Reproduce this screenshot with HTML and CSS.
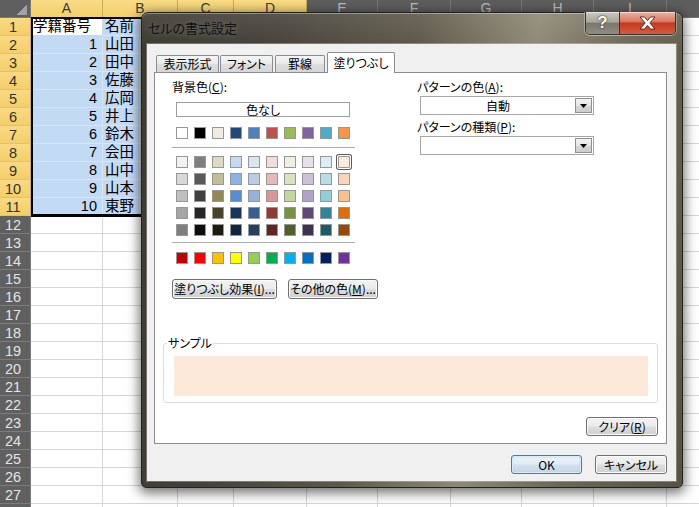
FILE: index.html
```html
<!DOCTYPE html>
<html lang="ja">
<head>
<meta charset="utf-8">
<title>セルの書式設定</title>
<link rel="stylesheet" href="styles.css">
</head>
<body>
<div class="sheet">
  <div class="row hdr"><span class="corner"><span class="tri"></span></span><span class="ch hl">A</span><span class="ch hl">B</span><span class="ch hl">C</span><span class="ch hl">D</span><span class="ch">E</span><span class="ch">F</span><span class="ch">G</span><span class="ch">H</span><span class="ch">I</span><span class="ch"></span></div>
  <div class="row"><span class="rh hl">1</span><span class="c act">学籍番号</span><span class="c sel">名前</span><span class="c"></span><span class="c"></span><span class="c"></span><span class="c"></span><span class="c"></span><span class="c"></span><span class="c"></span><span class="c"></span></div>
  <div class="row"><span class="rh hl">2</span><span class="c sel num">1</span><span class="c sel">山田</span><span class="c"></span><span class="c"></span><span class="c"></span><span class="c"></span><span class="c"></span><span class="c"></span><span class="c"></span><span class="c"></span></div>
  <div class="row"><span class="rh hl">3</span><span class="c sel num">2</span><span class="c sel">田中</span><span class="c"></span><span class="c"></span><span class="c"></span><span class="c"></span><span class="c"></span><span class="c"></span><span class="c"></span><span class="c"></span></div>
  <div class="row"><span class="rh hl">4</span><span class="c sel num">3</span><span class="c sel">佐藤</span><span class="c"></span><span class="c"></span><span class="c"></span><span class="c"></span><span class="c"></span><span class="c"></span><span class="c"></span><span class="c"></span></div>
  <div class="row"><span class="rh hl">5</span><span class="c sel num">4</span><span class="c sel">広岡</span><span class="c"></span><span class="c"></span><span class="c"></span><span class="c"></span><span class="c"></span><span class="c"></span><span class="c"></span><span class="c"></span></div>
  <div class="row"><span class="rh hl">6</span><span class="c sel num">5</span><span class="c sel">井上</span><span class="c"></span><span class="c"></span><span class="c"></span><span class="c"></span><span class="c"></span><span class="c"></span><span class="c"></span><span class="c"></span></div>
  <div class="row"><span class="rh hl">7</span><span class="c sel num">6</span><span class="c sel">鈴木</span><span class="c"></span><span class="c"></span><span class="c"></span><span class="c"></span><span class="c"></span><span class="c"></span><span class="c"></span><span class="c"></span></div>
  <div class="row"><span class="rh hl">8</span><span class="c sel num">7</span><span class="c sel">会田</span><span class="c"></span><span class="c"></span><span class="c"></span><span class="c"></span><span class="c"></span><span class="c"></span><span class="c"></span><span class="c"></span></div>
  <div class="row"><span class="rh hl">9</span><span class="c sel num">8</span><span class="c sel">山中</span><span class="c"></span><span class="c"></span><span class="c"></span><span class="c"></span><span class="c"></span><span class="c"></span><span class="c"></span><span class="c"></span></div>
  <div class="row"><span class="rh hl">10</span><span class="c sel num">9</span><span class="c sel">山本</span><span class="c"></span><span class="c"></span><span class="c"></span><span class="c"></span><span class="c"></span><span class="c"></span><span class="c"></span><span class="c"></span></div>
  <div class="row"><span class="rh hl">11</span><span class="c sel num">10</span><span class="c sel">東野</span><span class="c"></span><span class="c"></span><span class="c"></span><span class="c"></span><span class="c"></span><span class="c"></span><span class="c"></span><span class="c"></span></div>
  <div class="row"><span class="rh">12</span><span class="c"></span><span class="c"></span><span class="c"></span><span class="c"></span><span class="c"></span><span class="c"></span><span class="c"></span><span class="c"></span><span class="c"></span><span class="c"></span></div>
  <div class="row"><span class="rh">13</span><span class="c"></span><span class="c"></span><span class="c"></span><span class="c"></span><span class="c"></span><span class="c"></span><span class="c"></span><span class="c"></span><span class="c"></span><span class="c"></span></div>
  <div class="row"><span class="rh">14</span><span class="c"></span><span class="c"></span><span class="c"></span><span class="c"></span><span class="c"></span><span class="c"></span><span class="c"></span><span class="c"></span><span class="c"></span><span class="c"></span></div>
  <div class="row"><span class="rh">15</span><span class="c"></span><span class="c"></span><span class="c"></span><span class="c"></span><span class="c"></span><span class="c"></span><span class="c"></span><span class="c"></span><span class="c"></span><span class="c"></span></div>
  <div class="row"><span class="rh">16</span><span class="c"></span><span class="c"></span><span class="c"></span><span class="c"></span><span class="c"></span><span class="c"></span><span class="c"></span><span class="c"></span><span class="c"></span><span class="c"></span></div>
  <div class="row"><span class="rh">17</span><span class="c"></span><span class="c"></span><span class="c"></span><span class="c"></span><span class="c"></span><span class="c"></span><span class="c"></span><span class="c"></span><span class="c"></span><span class="c"></span></div>
  <div class="row"><span class="rh">18</span><span class="c"></span><span class="c"></span><span class="c"></span><span class="c"></span><span class="c"></span><span class="c"></span><span class="c"></span><span class="c"></span><span class="c"></span><span class="c"></span></div>
  <div class="row"><span class="rh">19</span><span class="c"></span><span class="c"></span><span class="c"></span><span class="c"></span><span class="c"></span><span class="c"></span><span class="c"></span><span class="c"></span><span class="c"></span><span class="c"></span></div>
  <div class="row"><span class="rh">20</span><span class="c"></span><span class="c"></span><span class="c"></span><span class="c"></span><span class="c"></span><span class="c"></span><span class="c"></span><span class="c"></span><span class="c"></span><span class="c"></span></div>
  <div class="row"><span class="rh">21</span><span class="c"></span><span class="c"></span><span class="c"></span><span class="c"></span><span class="c"></span><span class="c"></span><span class="c"></span><span class="c"></span><span class="c"></span><span class="c"></span></div>
  <div class="row"><span class="rh">22</span><span class="c"></span><span class="c"></span><span class="c"></span><span class="c"></span><span class="c"></span><span class="c"></span><span class="c"></span><span class="c"></span><span class="c"></span><span class="c"></span></div>
  <div class="row"><span class="rh">23</span><span class="c"></span><span class="c"></span><span class="c"></span><span class="c"></span><span class="c"></span><span class="c"></span><span class="c"></span><span class="c"></span><span class="c"></span><span class="c"></span></div>
  <div class="row"><span class="rh">24</span><span class="c"></span><span class="c"></span><span class="c"></span><span class="c"></span><span class="c"></span><span class="c"></span><span class="c"></span><span class="c"></span><span class="c"></span><span class="c"></span></div>
  <div class="row"><span class="rh">25</span><span class="c"></span><span class="c"></span><span class="c"></span><span class="c"></span><span class="c"></span><span class="c"></span><span class="c"></span><span class="c"></span><span class="c"></span><span class="c"></span></div>
  <div class="row"><span class="rh">26</span><span class="c"></span><span class="c"></span><span class="c"></span><span class="c"></span><span class="c"></span><span class="c"></span><span class="c"></span><span class="c"></span><span class="c"></span><span class="c"></span></div>
  <div class="row"><span class="rh">27</span><span class="c"></span><span class="c"></span><span class="c"></span><span class="c"></span><span class="c"></span><span class="c"></span><span class="c"></span><span class="c"></span><span class="c"></span><span class="c"></span></div>
  <div class="row"><span class="rh"></span><span class="c"></span><span class="c"></span><span class="c"></span><span class="c"></span><span class="c"></span><span class="c"></span><span class="c"></span><span class="c"></span><span class="c"></span><span class="c"></span></div>
  <div class="selbox"></div>

  <div class="dialog">
    <div class="titlebar">
      <span class="title">セルの書式設定</span>
      <div class="capbtns">
        <span class="cap help">?</span>
        <span class="cap close"><svg width="17" height="14" viewBox="0 0 17 14"><polygon points="1,1 5.5,1 8.5,4.6 11.5,1 16,1 10.8,7 16,13 11.5,13 8.5,9.4 5.5,13 1,13 6.2,7" fill="#fff" stroke="#5b1d12" stroke-width="0.9" stroke-linejoin="round"/></svg></span>
      </div>
    </div>
    <div class="client">
      <div class="tabs">
        <span class="tab t1">表示形式</span>
        <span class="tab t2">フォント</span>
        <span class="tab t3">罫線</span>
        <span class="tab t4 active">塗りつぶし</span>
      </div>
      <div class="panel">
        <div class="top">
          <div class="leftcol">
            <div class="lbl">背景色(<u>C</u>):</div>
            <div class="nocolor">色なし</div>
            <div class="swrow first">
              <span class="sw" style="background:#ffffff"></span><span class="sw" style="background:#000000"></span><span class="sw" style="background:#eeece1"></span><span class="sw" style="background:#1f497d"></span><span class="sw" style="background:#4f81bd"></span><span class="sw" style="background:#c0504d"></span><span class="sw" style="background:#9bbb59"></span><span class="sw" style="background:#8064a2"></span><span class="sw" style="background:#4bacc6"></span><span class="sw" style="background:#f79646"></span>
            </div>
            <div class="sep"></div>
            <div class="theme">
              <div class="swrow">
                <span class="sw" style="background:#f2f2f2"></span><span class="sw" style="background:#7f7f7f"></span><span class="sw" style="background:#ddd9c3"></span><span class="sw" style="background:#c6d9f0"></span><span class="sw" style="background:#dbe5f1"></span><span class="sw" style="background:#f2dcdb"></span><span class="sw" style="background:#ebf1dd"></span><span class="sw" style="background:#e5e0ec"></span><span class="sw" style="background:#dbeef3"></span><span class="sw picked" style="background:#fdeada"></span>
              </div>
              <div class="swrow">
                <span class="sw" style="background:#d8d8d8"></span><span class="sw" style="background:#595959"></span><span class="sw" style="background:#c4bd97"></span><span class="sw" style="background:#8db3e2"></span><span class="sw" style="background:#b8cce4"></span><span class="sw" style="background:#e5b9b7"></span><span class="sw" style="background:#d7e3bc"></span><span class="sw" style="background:#ccc1d9"></span><span class="sw" style="background:#b7dde8"></span><span class="sw" style="background:#fbd5b5"></span>
              </div>
              <div class="swrow">
                <span class="sw" style="background:#bfbfbf"></span><span class="sw" style="background:#3f3f3f"></span><span class="sw" style="background:#938953"></span><span class="sw" style="background:#548dd4"></span><span class="sw" style="background:#95b3d7"></span><span class="sw" style="background:#d99694"></span><span class="sw" style="background:#c3d69b"></span><span class="sw" style="background:#b2a2c7"></span><span class="sw" style="background:#92cddc"></span><span class="sw" style="background:#fac08f"></span>
              </div>
              <div class="swrow">
                <span class="sw" style="background:#a5a5a5"></span><span class="sw" style="background:#262626"></span><span class="sw" style="background:#494429"></span><span class="sw" style="background:#17365d"></span><span class="sw" style="background:#366092"></span><span class="sw" style="background:#953734"></span><span class="sw" style="background:#76923c"></span><span class="sw" style="background:#5f497a"></span><span class="sw" style="background:#31859b"></span><span class="sw" style="background:#e36c09"></span>
              </div>
              <div class="swrow">
                <span class="sw" style="background:#7f7f7f"></span><span class="sw" style="background:#0c0c0c"></span><span class="sw" style="background:#1d1b10"></span><span class="sw" style="background:#0f243e"></span><span class="sw" style="background:#244061"></span><span class="sw" style="background:#632423"></span><span class="sw" style="background:#4f6128"></span><span class="sw" style="background:#3f3151"></span><span class="sw" style="background:#205867"></span><span class="sw" style="background:#974806"></span>
              </div>
            </div>
            <div class="sep sep2"></div>
            <div class="swrow std">
              <span class="sw" style="background:#c00000"></span><span class="sw" style="background:#ff0000"></span><span class="sw" style="background:#ffc000"></span><span class="sw" style="background:#ffff00"></span><span class="sw" style="background:#92d050"></span><span class="sw" style="background:#00b050"></span><span class="sw" style="background:#00b0f0"></span><span class="sw" style="background:#0070c0"></span><span class="sw" style="background:#002060"></span><span class="sw" style="background:#7030a0"></span>
            </div>
            <div class="btnrow">
              <span class="btn effects">塗りつぶし効果(<u>I</u>)...</span>
              <span class="btn more">その他の色(<u>M</u>)...</span>
            </div>
          </div>
          <div class="rightcol">
            <div class="lbl">パターンの色(<u>A</u>):</div>
            <div class="combo"><span class="combo-val">自動</span><span class="drop"><svg width="7" height="4" viewBox="0 0 7 4"><polygon points="0,0 7,0 3.5,4" fill="#000"/></svg></span></div>
            <div class="lbl lbl2">パターンの種類(<u>P</u>):</div>
            <div class="combo"><span class="combo-val"></span><span class="drop"><svg width="7" height="4" viewBox="0 0 7 4"><polygon points="0,0 7,0 3.5,4" fill="#000"/></svg></span></div>
          </div>
        </div>
        <div class="sample">
          <span class="sample-lbl">サンプル</span>
          <div class="swatch"></div>
        </div>
        <div class="clearrow"><span class="btn clear">クリア(<u>R</u>)</span></div>
      </div>
      <div class="footer">
        <span class="btn ok">OK</span>
        <span class="btn cancel">キャンセル</span>
      </div>
    </div>
  </div>
</div>
</body>
</html>
```

FILE: styles.css
```css
html, body {
  margin: 0;
  padding: 0;
  width: 699px;
  height: 507px;
  overflow: hidden;
  background: #fff;
}

.sheet {
  position: relative;
  width: 699px;
  height: 507px;
  overflow: hidden;
  font-family: "Liberation Sans", "Noto Sans CJK JP", sans-serif;
  font-size: 14.5px;
  color: #000;
}

.row {
  display: flex;
  height: 18px;
  width: 760px;
}

.row > span {
  flex: none;
  box-sizing: border-box;
  height: 18px;
}

.row > :nth-child(1) { width: 31px; }
.row > :nth-child(2) { width: 72px; }
.row > :nth-child(3) { width: 75px; }
.row > :nth-child(4) { width: 56px; }
.row > :nth-child(5) { width: 73px; }
.row > :nth-child(6) { width: 71px; }
.row > :nth-child(7) { width: 73px; }
.row > :nth-child(8) { width: 71px; }
.row > :nth-child(9) { width: 72px; }
.row > :nth-child(10) { width: 73px; }
.row > :nth-child(11) { width: 72px; }

/* headers */
.corner {
  background: #5f5f5f;
  border-right: 1px solid #7a7a7a;
  border-bottom: 1px solid #7a7a7a;
  display: flex;
  align-items: flex-end;
  justify-content: flex-end;
  padding: 0 3px 2px 0;
}
.tri {
  width: 11px;
  height: 10px;
  background: linear-gradient(135deg, transparent 50%, #a3a3a3 50%);
}
.ch {
  background: #5e5e5e;
  color: #bcbcbc;
  border-right: 1px solid #787878;
  border-bottom: 1px solid #787878;
  text-align: center;
  font-size: 14px;
  line-height: 17px;
}
.ch.hl {
  background: linear-gradient(#f9dc87, #f4cf6a);
  color: #3a3a3a;
  border-right-color: #d6aa48;
  border-bottom-color: #c99e45;
}
.rh {
  background: #606060;
  color: #e4e4e4;
  border-right: 1px solid #7c7c7c;
  border-bottom: 1px solid #7c7c7c;
  text-align: center;
  padding-right: 4px;
  font-size: 14.5px;
  line-height: 18px;
}
.rh.hl {
  background: linear-gradient(#f9da84, #f4ce68);
  color: #333;
  border-right-color: #d6aa48;
  border-bottom-color: #e6c06a;
}

/* cells */
.c {
  border-right: 1px solid #d6d6d6;
  border-bottom: 1px solid #d6d6d6;
  white-space: nowrap;
  overflow: hidden;
  line-height: 17px;
  padding: 0 2px;
}
.c.sel {
  background: #c3daf4;
  border-right-color: #d7e6f7;
  border-bottom-color: #d7e6f7;
}
.c.num {
  text-align: right;
  padding-right: 5px;
}
.c.act {
  background: #fff;
}

.selbox {
  position: absolute;
  left: 31px;
  top: 17px;
  width: 148px;
  height: 200px;
  box-sizing: border-box;
  border: 2px solid #000;
  border-bottom-width: 3px;
  pointer-events: none;
}

/* dialog */
.dialog {
  position: absolute;
  left: 141px;
  top: 12px;
  width: 542px;
  height: 476px;
  box-sizing: border-box;
  border: 1px solid #24221b;
  border-radius: 7px 7px 5px 5px;
  padding: 0 6px 6px 5px;
  display: flex;
  flex-direction: column;
  background:
    linear-gradient(rgba(255,255,255,0.10), rgba(255,255,255,0) 36px),
    linear-gradient(100deg, #3c392f 0%, #45413a 22%, #5d5848 45%, #7f7966 58%, #8e8875 64%, #6c6655 80%, #575243 100%);
  box-shadow: inset 0 1px 0 rgba(255,255,255,0.35), 0 3px 12px 2px rgba(0,0,0,0.55);
  font-family: "Noto Sans CJK JP", "Noto Sans", sans-serif;
  font-size: 12px;
  font-feature-settings: "palt";
  color: #000;
}

.titlebar {
  display: flex;
  align-items: flex-start;
  height: 31px;
  flex: none;
}
.title {
  margin: 7px 0 0 1px;
  font-size: 13px;
  line-height: 16px;
  color: #111;
  text-shadow: 0 0 6px rgba(255,255,255,0.25);
}
.capbtns {
  margin-left: auto;
  margin-top: -1px;
  display: flex;
  height: 23px;
  box-sizing: border-box;
  border: 1px solid #38352d;
  border-top: none;
  border-radius: 0 0 5px 5px;
  overflow: hidden;
  box-shadow: 0 1px 0 rgba(255,255,255,0.45), 1px 0 0 rgba(255,255,255,0.3), -1px 0 0 rgba(255,255,255,0.3);
}
.cap {
  display: flex;
  align-items: center;
  justify-content: center;
}
.help {
  width: 33px;
  border-right: 1px solid #3a372f;
  background: linear-gradient(#cbc8c0 0%, #a9a69d 45%, #7a776d 52%, #8f8c82 100%);
  color: #fff;
  font-family: "Liberation Sans", sans-serif;
  font-weight: bold;
  font-size: 17px;
  line-height: 20px;
  text-shadow: 0 0 1px #2a2a2a, 0 0 2px #2a2a2a;
  box-shadow: inset 0 1px 0 rgba(255,255,255,0.5);
}
.close {
  width: 55px;
  background: linear-gradient(#ebb3a5 0%, #d97a63 42%, #c13b21 52%, #d55c3e 100%);
  box-shadow: inset 0 1px 0 rgba(255,255,255,0.5);
}

.client {
  flex: 1;
  background: #f0f0f0;
  box-shadow: 0 0 0 1px rgba(255,255,255,0.28);
  display: flex;
  flex-direction: column;
}

.tabs {
  display: flex;
  align-items: flex-end;
  height: 20px;
  margin-top: 8px;
  padding-left: 9px;
  position: relative;
  z-index: 1;
}
.tab {
  box-sizing: border-box;
  height: 17px;
  border: 1px solid #898c95;
  border-bottom: none;
  border-radius: 2px 2px 0 0;
  background: linear-gradient(#f5f5f5, #e9e9e9 50%, #dedede 51%, #d6d6d6);
  text-align: center;
  line-height: 15px;
  font-size: 12px;
}
.t1 { width: 63px; margin-right: 1px; }
.t2 { width: 53px; margin-right: 2px; }
.t3 { width: 50px; margin-right: 2px; }
.t4 { width: 68px; }
.tab.active {
  height: 21px;
  margin-bottom: -1px;
  background: #fff;
  line-height: 19px;
}

.panel {
  box-sizing: border-box;
  margin-left: 7px;
  width: 513px;
  height: 372px;
  background: #fff;
  border: 1px solid #898c95;
  display: flex;
  flex-direction: column;
}

.top {
  display: flex;
  padding-left: 17px;
}
.leftcol {
  width: 245px;
  display: flex;
  flex-direction: column;
}
.lbl {
  margin-top: 7px;
  line-height: 14px;
  height: 14px;
  white-space: nowrap;
}
.nocolor {
  margin: 8px 0 0 4px;
  width: 174px;
  height: 15px;
  box-sizing: border-box;
  border: 1px solid #9e9e9e;
  text-align: center;
  line-height: 13px;
}
.swrow {
  display: flex;
  gap: 6px;
  margin-left: 4px;
  height: 12px;
}
.swrow.first { margin-top: 10px; }
.sw {
  width: 12px;
  height: 12px;
  box-sizing: border-box;
  border: 1px solid #979797;
}
.sw.picked {
  border-radius: 1px;
  box-shadow: 0 0 0 1px #fff, 0 0 0 2px #5d5d5d;
}
.sep {
  margin-top: 8px;
  width: 183px;
  height: 1px;
  background: #a8adb5;
}
.sep2 { margin-top: 6px; }
.theme {
  margin-top: 8px;
  display: flex;
  flex-direction: column;
  gap: 5px;
}
.swrow.std { margin-top: 9px; }
.btnrow {
  display: flex;
  gap: 11px;
  margin-top: 15px;
}

.btn {
  box-sizing: border-box;
  display: flex;
  align-items: center;
  justify-content: center;
  height: 20px;
  border: 1px solid #707070;
  border-radius: 3px;
  background: linear-gradient(#f2f2f2 0%, #ebebeb 48%, #dddddd 52%, #cfcfcf 100%);
  box-shadow: inset 0 0 0 1px #fbfbfb;
  line-height: 16px;
  white-space: nowrap;
}
.effects { width: 105px; }
.more { width: 90px; }

.rightcol {
  display: flex;
  flex-direction: column;
}
.combo {
  margin: 2px 0 0 3px;
  width: 174px;
  height: 19px;
  box-sizing: border-box;
  border: 1px solid #a7a7a7;
  display: flex;
  align-items: center;
  padding-right: 1px;
}
.combo-val {
  flex: 1;
  text-align: center;
  line-height: 15px;
}
.drop {
  width: 17px;
  height: 15px;
  box-sizing: border-box;
  border: 1px solid #8f9092;
  background: linear-gradient(#f3f3f3, #e6e6e6 50%, #d7d7d7 51%, #cdcdcd);
  display: flex;
  align-items: center;
  justify-content: center;
}
.lbl2 { margin-top: 5px; }

.sample {
  margin: 44px 8px 0 8px;
  border: 1px solid #d5dfe5;
  border-radius: 3px;
  padding: 0 9px 6px 10px;
}
.sample-lbl {
  display: block;
  width: max-content;
  margin: -8px 0 0 -7px;
  padding: 0 1px;
  background: #fff;
  line-height: 14px;
}
.swatch {
  margin-top: 6px;
  height: 40px;
  background: #fde9d9;
}

.clearrow {
  display: flex;
  justify-content: flex-end;
  margin: 14px 8px 0 0;
}
.clear { width: 72px; height: 19px; }

.footer {
  display: flex;
  justify-content: flex-end;
  gap: 13px;
  margin: 11px 9px 0 0;
}
.footer .btn {
  width: 72px;
  height: 19px;
}
.btn.ok {
  width: 71px;
  border-color: #3c7fb1;
  background: linear-gradient(#eef4f9 0%, #e3ecf4 48%, #d3e0ec 52%, #c7d7e6 100%);
  box-shadow: inset 0 0 0 1px #d8ecf9, inset 0 0 2px 1px #a8d4f2;
}
```
